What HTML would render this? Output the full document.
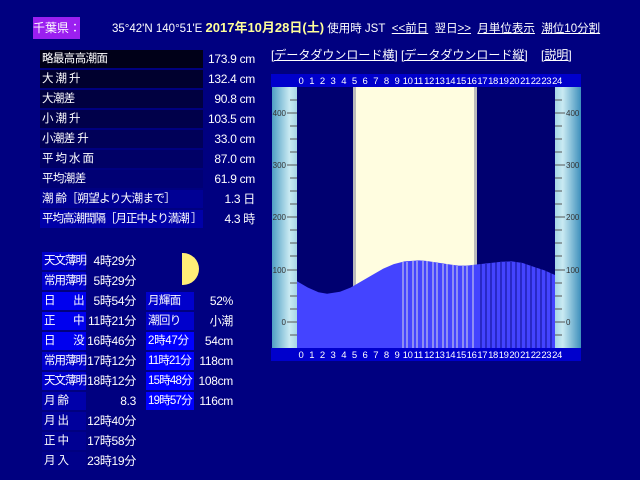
<!DOCTYPE html>
<html><head><meta charset="utf-8"><style>
body{margin:0;width:640px;height:480px;background:#000080;position:relative;overflow:hidden;font-family:"Liberation Sans","Noto Sans CJK JP",sans-serif;color:#fff;font-size:12px}
.a{position:absolute;white-space:nowrap}
.lab{position:absolute;height:18px;line-height:18px;padding-left:2px;box-sizing:border-box;white-space:nowrap;font-size:11.5px;letter-spacing:-0.6px;overflow:visible}
.val{position:absolute;text-align:right;height:18px;line-height:18px;white-space:nowrap;letter-spacing:-0.3px}
u{text-decoration:underline}
</style></head><body>
<div class="a" style="left:33px;top:17px;width:47px;height:22px;background:#9b1ff0;line-height:22px;text-align:center;font-size:12px">千葉県：</div>
<div class="a" style="left:112px;top:20px;line-height:16px;font-size:11.5px">35°42'N 140°51'E <b style="color:#ffff99;font-size:13px">2017年10月28日(土)</b> 使用時 JST&nbsp; <u>&lt;&lt;前日</u>&nbsp; 翌日<u>&gt;&gt;</u>&nbsp; <u>月単位表示</u>&nbsp; <u>潮位10分割</u></div>

<div class="lab" style="left:40px;top:50px;width:163px;background:#000018">略最高高潮面</div><div class="val" style="left:203px;top:50px;width:52px">173.9 cm</div>
<div class="lab" style="left:40px;top:70px;width:163px;background:#00002e">大 潮 升</div><div class="val" style="left:203px;top:70px;width:52px">132.4 cm</div>
<div class="lab" style="left:40px;top:90px;width:163px;background:#000040">大潮差</div><div class="val" style="left:203px;top:90px;width:52px">90.8 cm</div>
<div class="lab" style="left:40px;top:110px;width:163px;background:#00004a">小 潮 升</div><div class="val" style="left:203px;top:110px;width:52px">103.5 cm</div>
<div class="lab" style="left:40px;top:130px;width:163px;background:#000058">小潮差 升</div><div class="val" style="left:203px;top:130px;width:52px">33.0 cm</div>
<div class="lab" style="left:40px;top:150px;width:163px;background:#000066">平 均 水 面</div><div class="val" style="left:203px;top:150px;width:52px">87.0 cm</div>
<div class="lab" style="left:40px;top:170px;width:163px;background:#000074">平均潮差</div><div class="val" style="left:203px;top:170px;width:52px">61.9 cm</div>
<div class="lab" style="left:40px;top:190px;width:163px;background:#000094">潮 齢［朔望より大潮まで］</div><div class="val" style="left:203px;top:190px;width:52px">1.3 日</div>
<div class="lab" style="left:40px;top:210px;width:163px;background:#0000a8;letter-spacing:-1px">平均高潮間隔［月正中より満潮 ］</div><div class="val" style="left:203px;top:210px;width:52px">4.3 時</div>

<div class="a" style="left:271px;top:47px;line-height:16px"><u>[データダウンロード横]</u> <u>[データダウンロード縦]</u>&nbsp;&nbsp;&nbsp; <u>[説明]</u></div>

<div class="lab" style="left:42px;top:252px;width:44px;background:#0000cc;letter-spacing:-1px">天文薄明</div><div class="val" style="left:86px;top:252px;width:50px">4時29分</div>
<div class="lab" style="left:42px;top:272px;width:44px;background:#0000cc;letter-spacing:-1px">常用薄明</div><div class="val" style="left:86px;top:272px;width:50px">5時29分</div>
<div class="lab" style="left:42px;top:292px;width:44px;background:#0000ee">日<span style="position:absolute;right:2px">出</span></div><div class="val" style="left:86px;top:292px;width:50px">5時54分</div>
<div class="lab" style="left:42px;top:312px;width:44px;background:#0000ee">正<span style="position:absolute;right:2px">中</span></div><div class="val" style="left:86px;top:312px;width:50px">11時21分</div>
<div class="lab" style="left:42px;top:332px;width:44px;background:#0000ee">日<span style="position:absolute;right:2px">没</span></div><div class="val" style="left:86px;top:332px;width:50px">16時46分</div>
<div class="lab" style="left:42px;top:352px;width:44px;background:#0000cc;letter-spacing:-1px">常用薄明</div><div class="val" style="left:86px;top:352px;width:50px">17時12分</div>
<div class="lab" style="left:42px;top:372px;width:44px;background:#0000cc;letter-spacing:-1px">天文薄明</div><div class="val" style="left:86px;top:372px;width:50px">18時12分</div>
<div class="lab" style="left:42px;top:392px;width:44px;background:#0000aa">月 齢</div><div class="val" style="left:86px;top:392px;width:50px">8.3</div>
<div class="lab" style="left:42px;top:412px;width:44px;background:#00009c">月 出</div><div class="val" style="left:86px;top:412px;width:50px">12時40分</div>
<div class="lab" style="left:42px;top:432px;width:44px;background:#000092">正 中</div><div class="val" style="left:86px;top:432px;width:50px">17時58分</div>
<div class="lab" style="left:42px;top:452px;width:44px;background:#00008a">月 入</div><div class="val" style="left:86px;top:452px;width:50px">23時19分</div>

<div class="a" style="left:182px;top:253px;width:17px;height:32px;background:#ffee77;border-radius:0 17px 17px 0"></div>

<div class="lab" style="left:146px;top:292px;width:48px;background:#0000cc">月輝面</div><div class="val" style="left:194px;top:292px;width:39px">52%</div>
<div class="lab" style="left:146px;top:312px;width:48px;background:#0000cc">潮回り</div><div class="val" style="left:194px;top:312px;width:39px">小潮</div>
<div class="lab" style="left:146px;top:332px;width:48px;background:#0000ff;letter-spacing:-0.3px">2時47分</div><div class="val" style="left:194px;top:332px;width:39px">54cm</div>
<div class="lab" style="left:146px;top:352px;width:48px;background:#0000ff;letter-spacing:-0.8px">11時21分</div><div class="val" style="left:194px;top:352px;width:39px">118cm</div>
<div class="lab" style="left:146px;top:372px;width:48px;background:#0000ff;letter-spacing:-0.8px">15時48分</div><div class="val" style="left:194px;top:372px;width:39px">108cm</div>
<div class="lab" style="left:146px;top:392px;width:48px;background:#0000ff;letter-spacing:-0.8px">19時57分</div><div class="val" style="left:194px;top:392px;width:39px">116cm</div>

<svg class="a" style="left:0;top:0" width="640" height="480" viewBox="0 0 640 480">
<defs>
<linearGradient id="gl" x1="0" x2="1" y1="0" y2="0"><stop offset="0" stop-color="#4f9ec4"/><stop offset="0.7" stop-color="#c9eaf2"/><stop offset="1" stop-color="#a8d6e6"/></linearGradient>
<linearGradient id="gr" x1="0" x2="1" y1="0" y2="0"><stop offset="0" stop-color="#a8d6e6"/><stop offset="0.3" stop-color="#c9eaf2"/><stop offset="1" stop-color="#3d8fbc"/></linearGradient>
</defs>
<rect x="271" y="74" width="310" height="13" fill="#0000cc"/>
<rect x="271" y="348" width="310" height="13" fill="#0000cc"/>
<rect x="272" y="87" width="25" height="261" fill="url(#gl)"/>
<rect x="555" y="87" width="26" height="261" fill="url(#gr)"/>
<rect x="297" y="87" width="258" height="261" fill="#000070"/>
<rect x="353" y="87" width="124" height="261" fill="#fffde0"/>
<rect x="353" y="87" width="3" height="261" fill="#bbbbbb"/>
<rect x="474" y="87" width="3" height="261" fill="#bbbbbb"/>
<path d="M297,281.3 L307.75,287.5 318.5,292.2 327.1,293.8 340,291.7 350.75,287.5 361.5,281.3 372.25,275 383,268.8 393.75,264.1 404.5,261.4 419,260.4 426,260.9 436.75,262.5 447.5,264.1 458.25,265.6 466.9,265.6 479.75,264.1 490.5,263 501.25,261.7 512,261.4 522.75,263 533.5,266.7 544.25,270.3 555,275 L555,348 L297,348 Z" fill="#4444ff"/>
<g stroke="#fffde0" stroke-width="0.8">
<line x1="403" y1="262" x2="403" y2="348"/><line x1="407" y1="262" x2="407" y2="348"/><line x1="413" y1="261" x2="413" y2="348"/><line x1="417" y1="261" x2="417" y2="348"/><line x1="423" y1="261" x2="423" y2="348"/><line x1="427" y1="261" x2="427" y2="348"/><line x1="433" y1="262" x2="433" y2="348"/><line x1="437" y1="263" x2="437" y2="348"/><line x1="443" y1="264" x2="443" y2="348"/><line x1="447" y1="264" x2="447" y2="348"/><line x1="453" y1="265" x2="453" y2="348"/><line x1="457" y1="266" x2="457" y2="348"/><line x1="463" y1="266" x2="463" y2="348"/><line x1="467" y1="266" x2="467" y2="348"/><line x1="473" y1="265" x2="473" y2="348"/>
</g>
<g stroke="#000070" stroke-width="0.8">
<line x1="481" y1="264" x2="481" y2="348"/><line x1="486" y1="264" x2="486" y2="348"/><line x1="491" y1="263" x2="491" y2="348"/><line x1="496" y1="262" x2="496" y2="348"/><line x1="501" y1="262" x2="501" y2="348"/><line x1="506" y1="262" x2="506" y2="348"/><line x1="511" y1="262" x2="511" y2="348"/><line x1="516" y1="262" x2="516" y2="348"/><line x1="521" y1="263" x2="521" y2="348"/><line x1="526" y1="264" x2="526" y2="348"/><line x1="531" y1="266" x2="531" y2="348"/><line x1="536" y1="267" x2="536" y2="348"/><line x1="541" y1="269" x2="541" y2="348"/><line x1="546" y1="271" x2="546" y2="348"/><line x1="551" y1="273" x2="551" y2="348"/>
</g>
<g stroke="#555" stroke-width="1">
<line x1="290" y1="100" x2="297" y2="100"/><line x1="287" y1="113" x2="297" y2="113"/><line x1="290" y1="126" x2="297" y2="126"/><line x1="290" y1="139" x2="297" y2="139"/><line x1="290" y1="152" x2="297" y2="152"/><line x1="287" y1="165" x2="297" y2="165"/><line x1="290" y1="178" x2="297" y2="178"/><line x1="290" y1="191" x2="297" y2="191"/><line x1="290" y1="204" x2="297" y2="204"/><line x1="287" y1="217" x2="297" y2="217"/><line x1="290" y1="230" x2="297" y2="230"/><line x1="290" y1="243" x2="297" y2="243"/><line x1="290" y1="256" x2="297" y2="256"/><line x1="287" y1="270" x2="297" y2="270"/><line x1="290" y1="283" x2="297" y2="283"/><line x1="290" y1="296" x2="297" y2="296"/><line x1="290" y1="309" x2="297" y2="309"/><line x1="287" y1="322" x2="297" y2="322"/><line x1="290" y1="335" x2="297" y2="335"/>
<line x1="555" y1="100" x2="562" y2="100"/><line x1="555" y1="113" x2="565" y2="113"/><line x1="555" y1="126" x2="562" y2="126"/><line x1="555" y1="139" x2="562" y2="139"/><line x1="555" y1="152" x2="562" y2="152"/><line x1="555" y1="165" x2="565" y2="165"/><line x1="555" y1="178" x2="562" y2="178"/><line x1="555" y1="191" x2="562" y2="191"/><line x1="555" y1="204" x2="562" y2="204"/><line x1="555" y1="217" x2="565" y2="217"/><line x1="555" y1="230" x2="562" y2="230"/><line x1="555" y1="243" x2="562" y2="243"/><line x1="555" y1="256" x2="562" y2="256"/><line x1="555" y1="270" x2="565" y2="270"/><line x1="555" y1="283" x2="562" y2="283"/><line x1="555" y1="296" x2="562" y2="296"/><line x1="555" y1="309" x2="562" y2="309"/><line x1="555" y1="322" x2="565" y2="322"/><line x1="555" y1="335" x2="562" y2="335"/>
</g>
<g font-family="Liberation Sans, sans-serif" font-size="8" fill="#333">
<text x="286" y="116" text-anchor="end">400</text><text x="286" y="168" text-anchor="end">300</text><text x="286" y="220" text-anchor="end">200</text><text x="286" y="273" text-anchor="end">100</text><text x="286" y="325" text-anchor="end">0</text>
<text x="566" y="116">400</text><text x="566" y="168">300</text><text x="566" y="220">200</text><text x="566" y="273">100</text><text x="566" y="325">0</text>
</g>
<g font-family="Liberation Sans, sans-serif" font-size="9.5" fill="#fff" text-anchor="middle" letter-spacing="-0.4">
<text x="301" y="84">0</text><text x="311.7" y="84">1</text><text x="322.3" y="84">2</text><text x="333" y="84">3</text><text x="343.7" y="84">4</text><text x="354.3" y="84">5</text><text x="365" y="84">6</text><text x="375.7" y="84">7</text><text x="386.3" y="84">8</text><text x="397" y="84">9</text><text x="407.7" y="84">10</text><text x="418.3" y="84">11</text><text x="429" y="84">12</text><text x="439.7" y="84">13</text><text x="450.3" y="84">14</text><text x="461" y="84">15</text><text x="471.7" y="84">16</text><text x="482.3" y="84">17</text><text x="493" y="84">18</text><text x="503.7" y="84">19</text><text x="514.3" y="84">20</text><text x="525" y="84">21</text><text x="535.7" y="84">22</text><text x="546.3" y="84">23</text><text x="557" y="84">24</text>
<text x="301" y="358">0</text><text x="311.7" y="358">1</text><text x="322.3" y="358">2</text><text x="333" y="358">3</text><text x="343.7" y="358">4</text><text x="354.3" y="358">5</text><text x="365" y="358">6</text><text x="375.7" y="358">7</text><text x="386.3" y="358">8</text><text x="397" y="358">9</text><text x="407.7" y="358">10</text><text x="418.3" y="358">11</text><text x="429" y="358">12</text><text x="439.7" y="358">13</text><text x="450.3" y="358">14</text><text x="461" y="358">15</text><text x="471.7" y="358">16</text><text x="482.3" y="358">17</text><text x="493" y="358">18</text><text x="503.7" y="358">19</text><text x="514.3" y="358">20</text><text x="525" y="358">21</text><text x="535.7" y="358">22</text><text x="546.3" y="358">23</text><text x="557" y="358">24</text>
</g>
</svg>
</body></html>
